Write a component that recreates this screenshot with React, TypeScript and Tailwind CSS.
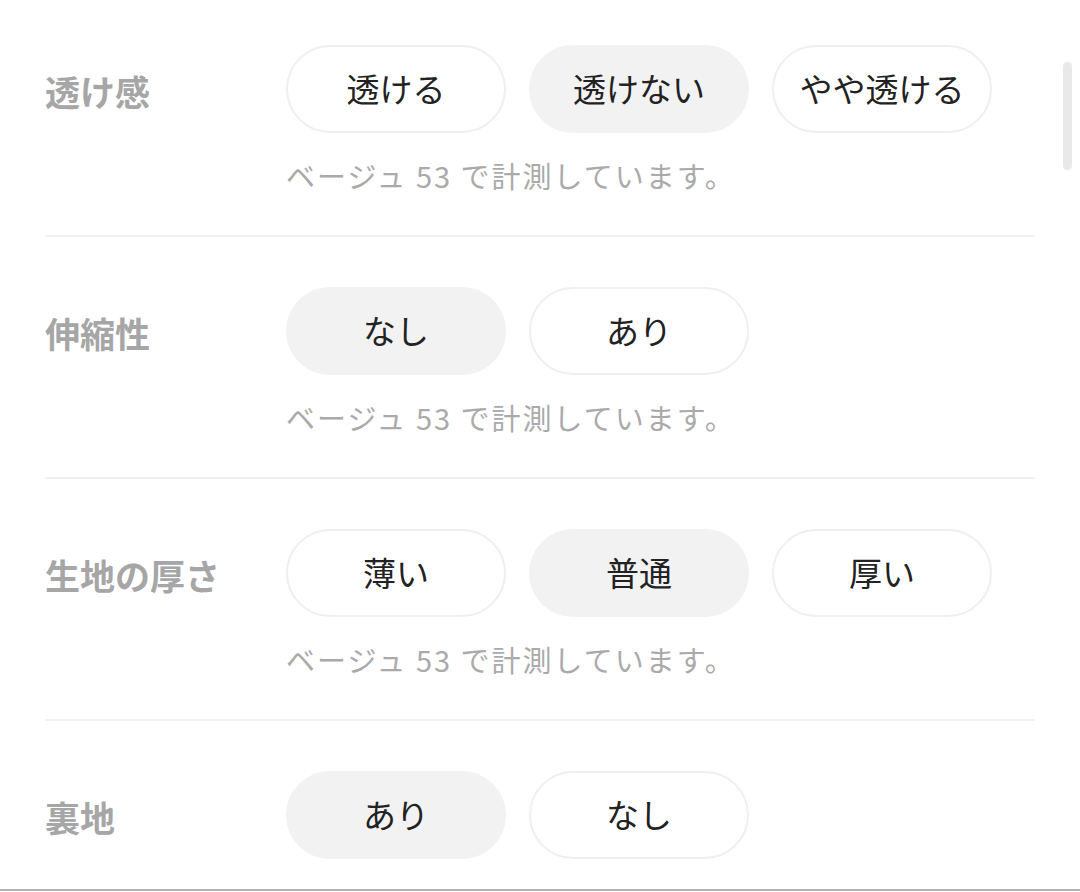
import React from "react";

type Row = { label: string; options: string[]; selected: number; note?: boolean };

const rows: Row[] = [
  { label: "透け感", options: ["透ける", "透けない", "やや透ける"], selected: 1, note: true },
  { label: "伸縮性", options: ["なし", "あり"], selected: 0, note: true },
  { label: "生地の厚さ", options: ["薄い", "普通", "厚い"], selected: 1, note: true },
  { label: "裏地", options: ["あり", "なし"], selected: 0, note: false },
];

const font = { fontFamily: '"Noto Sans CJK JP", "Noto Sans", sans-serif' };

export default function App() {
  return (
    <div className="relative w-[1080px] h-[892px] bg-white flex flex-col overflow-hidden" style={font}>
      <div className="flex-1 overflow-hidden px-[45px] pt-[45px]">
        {rows.map((r, i) => (
          <div key={i} className={`${i > 0 ? "pt-[50px]" : ""} pb-[45px] border-b-2 border-[#f1f1f1]`}>
            <div className="flex items-start">
              <div className="w-[241px] shrink-0 mt-[26px] text-[35px] leading-[40px] font-bold text-[#a6a6a6]">
                {r.label}
              </div>
              <div>
                <div className="flex gap-[23px]">
                  {r.options.map((o, j) => (
                    <div
                      key={j}
                      className={`w-[220px] h-[88px] rounded-full border-2 flex items-center justify-center text-[33px] text-[#222222] ${
                        j === r.selected ? "bg-[#f2f2f2] border-[#f2f2f2]" : "bg-white border-[#efefef]"
                      }`}
                    >
                      {o}
                    </div>
                  ))}
                </div>
                {r.note && (
                  <div className="mt-[27px] text-[29px] leading-[30px] tracking-[2px] text-[#aaaaaa]">
                    ベージュ 53 で計測しています。
                  </div>
                )}
              </div>
            </div>
          </div>
        ))}
      </div>
      <div className="h-[2px] bg-[#b3b3b3]" />
      <div className="h-[1px] bg-white" />
      <div className="absolute left-[1063px] top-[62px] w-[9px] h-[108px] rounded-full bg-[#e9e9e9]" />
    </div>
  );
}
